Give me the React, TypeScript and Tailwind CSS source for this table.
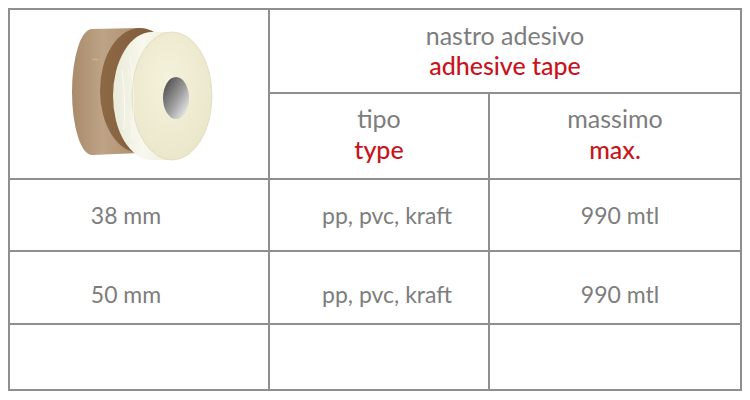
const FONT = "font-['Lato','Liberation_Sans',sans-serif]";

function TapeRolls() {
  // coordinates are page pixels; the viewBox is shifted to the cell's origin
  return (
    <svg viewBox="10 10 258 168" className="w-[258px] h-[168px]">
      <defs>
        <linearGradient id="brownSide" x1="0" y1="0" x2="1" y2="0">
          <stop offset="0" stopColor="#a98b6b" />
          <stop offset="0.45" stopColor="#bea386" />
          <stop offset="1" stopColor="#ad8e6d" />
        </linearGradient>
        <linearGradient id="brownFace" x1="0" y1="0" x2="1" y2="0">
          <stop offset="0" stopColor="#8c6845" />
          <stop offset="1" stopColor="#7b5737" />
        </linearGradient>
        <linearGradient id="clearSide" x1="0" y1="0" x2="1" y2="0">
          <stop offset="0" stopColor="#eaead8" />
          <stop offset="0.5" stopColor="#f8f8ee" />
          <stop offset="1" stopColor="#efeed8" />
        </linearGradient>
        <radialGradient id="clearFace" cx="0.45" cy="0.4" r="0.7">
          <stop offset="0" stopColor="#f5f2dc" />
          <stop offset="1" stopColor="#e9e5c8" />
        </radialGradient>
        <linearGradient id="hole" x1="0" y1="0" x2="1" y2="1">
          <stop offset="0" stopColor="#3d3d3d" />
          <stop offset="0.55" stopColor="#a0a0a0" />
          <stop offset="1" stopColor="#ffffff" />
        </linearGradient>
      </defs>

      {/* brown roll */}
      <path d="M92 29 L140 28 L140 153 L92 155 A20 63 0 0 1 92 29 Z" fill="url(#brownSide)" />
      <ellipse cx="140" cy="90.5" rx="40" ry="62.5" fill="url(#brownFace)" />
      <path d="M92 60 Q95 58 98 60" stroke="#d8c4ad" strokeWidth="1" fill="none" opacity="0.7" />

      {/* clear roll */}
      <path d="M152 32 L172 32 L172 160 L152 160 A39 64 0 0 1 152 32 Z" fill="url(#clearSide)" />
      <ellipse cx="172" cy="96" rx="40" ry="64" fill="url(#clearFace)" />
      <ellipse cx="172" cy="96" rx="40" ry="64" fill="none" stroke="#dedabd" strokeWidth="0.8" />
      <path d="M122 70 Q126 100 124 130" stroke="#ffffff" strokeWidth="1.2" fill="none" opacity="0.6" />
      <path d="M130 55 Q136 95 132 140" stroke="#ffffff" strokeWidth="1" fill="none" opacity="0.5" />
      <ellipse cx="176" cy="98" rx="13" ry="21" fill="url(#hole)" />
    </svg>
  );
}

function Cell({ children, className = '' }: { children?: React.ReactNode; className?: string }) {
  return <div className={`bg-white flex flex-col items-center justify-center ${className}`}>{children}</div>;
}

export default function App() {
  return (
    <div className={`w-[750px] h-[400px] bg-white pt-[8px] pl-[8px] ${FONT}`}>
      <div className="grid w-[734px] grid-cols-[258px_218px_250px] grid-rows-[82px_84px_70px_71px_64px] gap-[2px] p-[2px] bg-[#8f8f8f]">
        <Cell className="row-span-2">
          <TapeRolls />
        </Cell>
        <Cell className="col-span-2 text-[25px] leading-[30px] pb-[2px]">
          <span className="text-[#7d7d7d]">nastro adesivo</span>
          <span className="text-[#c8141c] font-medium">adhesive tape</span>
        </Cell>
        <Cell className="text-[25px] leading-[31px] pb-[4px]">
          <span className="text-[#7d7d7d]">tipo</span>
          <span className="text-[#c8141c] font-medium">type</span>
        </Cell>
        <Cell className="text-[25px] leading-[31px] pb-[4px]">
          <span className="text-[#7d7d7d]">massimo</span>
          <span className="text-[#c8141c] font-medium">max.</span>
        </Cell>

        <Cell className="text-[23px] text-[#7d7d7d] pr-[26px]">38 mm</Cell>
        <Cell className="text-[23px] text-[#7d7d7d] pl-[16px]">pp, pvc, kraft</Cell>
        <Cell className="text-[23px] text-[#7d7d7d] pl-[10px]">990 mtl</Cell>

        <Cell className="text-[23px] text-[#7d7d7d] pr-[26px] pt-[13px]">50 mm</Cell>
        <Cell className="text-[23px] text-[#7d7d7d] pl-[16px] pt-[13px]">pp, pvc, kraft</Cell>
        <Cell className="text-[23px] text-[#7d7d7d] pl-[10px] pt-[13px]">990 mtl</Cell>

        <Cell />
        <Cell />
        <Cell />
      </div>
    </div>
  );
}
